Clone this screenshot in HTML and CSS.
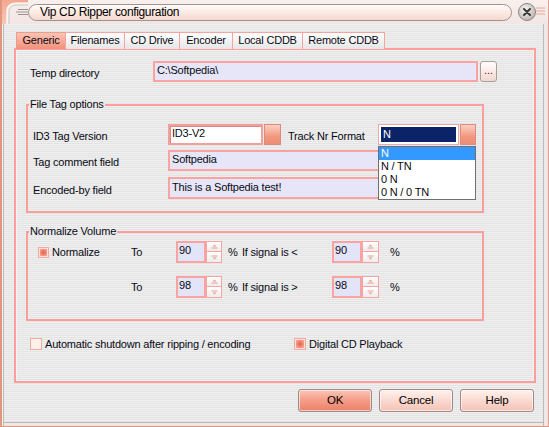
FILE: index.html
```html
<!DOCTYPE html>
<html>
<head>
<meta charset="utf-8">
<title>Vip CD Ripper configuration</title>
<link rel="stylesheet" href="styles.css">
</head>
<body>
<div class="window">
  <div class="titlebar">
    <div class="grip">
      <svg width="26" height="24" viewBox="0 0 26 24">
        <defs>
          <linearGradient id="sal" x1="0" y1="0" x2="0" y2="1">
            <stop offset="0" stop-color="#f4a88e"/>
            <stop offset="1" stop-color="#f7c8b8"/>
          </linearGradient>
        </defs>
        <path d="M0 0 H26 V3 H14 Q6 3 5 10 V24 H0 Z" fill="url(#sal)"/>
        <path d="M5 24 V10 Q6 3 14 3 H26" fill="none" stroke="#ffffff" stroke-width="1.2"/>
        <path d="M7 24 V11 Q8 5 15 5 H26" fill="none" stroke="#c9bcb8" stroke-width="0.8"/>
        <line x1="16" y1="9.5" x2="26" y2="9.5" stroke="#9a9290" stroke-width="1"/>
        <line x1="14" y1="12" x2="26" y2="12" stroke="#9a9290" stroke-width="1"/>
        <line x1="16" y1="14.5" x2="26" y2="14.5" stroke="#9a9290" stroke-width="1"/>
      </svg>
    </div>
    <div class="title-pill">Vip CD Ripper configuration</div>
    <div class="close">
      <svg width="35" height="24" viewBox="0 0 35 24">
        <defs>
          <radialGradient id="cg" cx="0.4" cy="0.35" r="0.7">
            <stop offset="0" stop-color="#f6f4f4"/>
            <stop offset="1" stop-color="#b9b2b0"/>
          </radialGradient>
        </defs>
        <line x1="24" y1="8" x2="33" y2="8" stroke="#e6a898" stroke-width="1"/>
        <line x1="24" y1="11" x2="33" y2="11" stroke="#e6a898" stroke-width="1"/>
        <line x1="24" y1="14" x2="33" y2="14" stroke="#e6a898" stroke-width="1"/>
        <circle cx="15" cy="12" r="8.5" fill="url(#cg)" stroke="#8d8684" stroke-width="1"/>
        <path d="M12 9 L18 15 M18 9 L12 15" stroke="#3c3838" stroke-width="2" stroke-linecap="round"/>
      </svg>
    </div>
  </div>

  <div class="client">
    <div class="tabs">
      <div class="tab active">Generic</div>
      <div class="tab">Filenames</div>
      <div class="tab">CD Drive</div>
      <div class="tab">Encoder</div>
      <div class="tab">Local CDDB</div>
      <div class="tab">Remote CDDB</div>
    </div>

    <div class="panel">
      <div class="temp-row">
        <span class="temp-lbl">Temp directory</span>
        <div class="field lav temp-field">C:\Softpedia\</div>
        <div class="btn-dots">...</div>
      </div>

      <fieldset class="group tag-group">
        <legend>File Tag options</legend>
        <div class="frow frow-first">
          <span class="flbl">ID3 Tag Version</span>
          <div class="combo">
            <div class="field white id3-field">ID3-V2</div>
            <div class="dropbtn"></div>
          </div>
          <span class="track-lbl">Track Nr Format</span>
          <div class="combo track-combo">
            <div class="sel-field"><span class="sel-inner">N</span></div>
            <div class="dropbtn dropbtn-track"></div>
            <ul class="droplist">
              <li class="hi">N</li>
              <li>N / TN</li>
              <li>0 N</li>
              <li>0 N / 0 TN</li>
            </ul>
          </div>
        </div>
        <div class="frow frow-comment">
          <span class="flbl">Tag comment field</span>
          <div class="field lav wide-field">Softpedia</div>
        </div>
        <div class="frow frow-enc">
          <span class="flbl">Encoded-by field</span>
          <div class="field lav wide-field">This is a Softpedia test!</div>
        </div>
      </fieldset>

      <fieldset class="group norm-group">
        <legend>Normalize Volume</legend>
        <div class="nrow nrow-first">
          <div class="chk-cell"><span class="chk on"></span><span class="chk-text">Normalize</span></div>
          <span>To</span>
          <div class="spin">
            <div class="spin-val">90</div>
            <div class="spin-btns">
              <div class="spin-b"><svg width="7" height="5" viewBox="0 0 7 5"><path d="M1.5 2.5 L3.5 0.5 L5.5 2.5 Z" fill="#eb9a92"/><line x1="0.5" y1="4" x2="6.5" y2="4" stroke="#eb9a92" stroke-width="1"/></svg></div>
              <div class="spin-b"><svg width="7" height="5" viewBox="0 0 7 5"><line x1="0.5" y1="1" x2="6.5" y2="1" stroke="#eb9a92" stroke-width="1"/><path d="M1.5 2.5 L3.5 4.5 L5.5 2.5 Z" fill="#eb9a92"/></svg></div>
            </div>
          </div>
          <span>%</span>
          <span>If signal is &lt;</span>
          <div class="spin spin-r">
            <div class="spin-val">90</div>
            <div class="spin-btns">
              <div class="spin-b"><svg width="7" height="5" viewBox="0 0 7 5"><path d="M1.5 2.5 L3.5 0.5 L5.5 2.5 Z" fill="#eb9a92"/><line x1="0.5" y1="4" x2="6.5" y2="4" stroke="#eb9a92" stroke-width="1"/></svg></div>
              <div class="spin-b"><svg width="7" height="5" viewBox="0 0 7 5"><line x1="0.5" y1="1" x2="6.5" y2="1" stroke="#eb9a92" stroke-width="1"/><path d="M1.5 2.5 L3.5 4.5 L5.5 2.5 Z" fill="#eb9a92"/></svg></div>
            </div>
          </div>
          <span>%</span>
        </div>
        <div class="nrow nrow-second">
          <div class="chk-cell"></div>
          <span>To</span>
          <div class="spin">
            <div class="spin-val">98</div>
            <div class="spin-btns">
              <div class="spin-b"><svg width="7" height="5" viewBox="0 0 7 5"><path d="M1.5 2.5 L3.5 0.5 L5.5 2.5 Z" fill="#eb9a92"/><line x1="0.5" y1="4" x2="6.5" y2="4" stroke="#eb9a92" stroke-width="1"/></svg></div>
              <div class="spin-b"><svg width="7" height="5" viewBox="0 0 7 5"><line x1="0.5" y1="1" x2="6.5" y2="1" stroke="#eb9a92" stroke-width="1"/><path d="M1.5 2.5 L3.5 4.5 L5.5 2.5 Z" fill="#eb9a92"/></svg></div>
            </div>
          </div>
          <span>%</span>
          <span>If signal is &gt;</span>
          <div class="spin spin-r">
            <div class="spin-val">98</div>
            <div class="spin-btns">
              <div class="spin-b"><svg width="7" height="5" viewBox="0 0 7 5"><path d="M1.5 2.5 L3.5 0.5 L5.5 2.5 Z" fill="#eb9a92"/><line x1="0.5" y1="4" x2="6.5" y2="4" stroke="#eb9a92" stroke-width="1"/></svg></div>
              <div class="spin-b"><svg width="7" height="5" viewBox="0 0 7 5"><line x1="0.5" y1="1" x2="6.5" y2="1" stroke="#eb9a92" stroke-width="1"/><path d="M1.5 2.5 L3.5 4.5 L5.5 2.5 Z" fill="#eb9a92"/></svg></div>
            </div>
          </div>
          <span>%</span>
        </div>
      </fieldset>

      <div class="opt-row">
        <div class="opt"><span class="chk"></span><span class="chk-text">Automatic shutdown after ripping / encoding</span></div>
        <div class="opt"><span class="chk on"></span><span class="chk-text">Digital CD Playback</span></div>
      </div>
    </div>

    <div class="buttons">
      <div class="btn btn-ok">OK</div>
      <div class="btn">Cancel</div>
      <div class="btn">Help</div>
    </div>
  </div>
</div>
</body>
</html>
```

FILE: styles.css
```css
* { box-sizing: border-box; }
html, body { margin: 0; padding: 0; }
body {
  width: 549px;
  height: 427px;
  overflow: hidden;
  font-family: "Liberation Sans", Arial, sans-serif;
  font-size: 11px;
  letter-spacing: -0.2px;
  color: #0a0a14;
  background: #ffffff;
}

.window {
  width: 549px;
  height: 427px;
  background: repeating-linear-gradient(to bottom, #efefef 0, #efefef 1px, #e4e4e4 1px, #e4e4e4 2px);
  border-left: 2px solid #e2957f;
  border-right: 1px solid #e0a08e;
  border-bottom: 1px solid #dc9884;
  box-shadow:
    inset 1px 0 #f8eeea,
    inset 2px 0 #bdbdbd,
    inset -1px 0 #f2e0da,
    inset -4px 0 #efe8e6,
    inset -5px 0 #b9b9b9,
    inset 0 -1px #f2e0da,
    inset 0 -3px #efe8e6,
    inset 0 -4px #b9b9b9;
}

/* ---------- title bar ---------- */
.titlebar {
  height: 24px;
  display: flex;
  align-items: flex-start;
  background: linear-gradient(to bottom, #f9efec, #f1e6e3);
}
.grip { width: 26px; height: 24px; }
.grip svg, .close svg { display: block; }
.title-pill {
  width: 484px;
  height: 17px;
  margin-top: 4px;
  border: 1px solid #9c9490;
  border-radius: 9px;
  background: linear-gradient(to bottom, #fffbfa 0%, #fbeae3 50%, #f5d9cd 100%);
  padding-left: 11px;
  font-size: 12px;
  line-height: 15px;
  letter-spacing: -0.35px;
  color: #000;
}
.close { width: 35px; height: 24px; }

/* ---------- client ---------- */
.client { padding: 8px 0 0 12px; }

.tabs {
  display: flex;
  margin-left: 2px;
  height: 16px;
}
.tab {
  height: 17px;
  padding: 0;
  border: 1px solid #f3a6a0;
  border-bottom: none;
  background: linear-gradient(to bottom, #ffffff, #e6e6e6);
  line-height: 15px;
  text-align: center;
  white-space: nowrap;
  position: relative;
  z-index: 1;
}
.tab + .tab { margin-left: -1px; }
.tab.active {
  background: linear-gradient(to bottom, #fbc4b4, #f2907a);
  border-color: #ef9c8c;
}
.tab:nth-child(1) { width: 50px; }
.tab:nth-child(2) { width: 60px; }
.tab:nth-child(3) { width: 56px; }
.tab:nth-child(4) { width: 54px; }
.tab:nth-child(5) { width: 71px; }
.tab:nth-child(6) { width: 83px; }

.panel {
  width: 522px;
  height: 335px;
  border: 2px solid #fb9e9c;
  box-shadow: inset 0 0 0 1px #f7f2f1;
}

/* ---------- temp directory ---------- */
.temp-row {
  display: flex;
  align-items: center;
  margin-top: 11px;
  height: 21px;
}
.temp-lbl {
  width: 137px;
  padding-left: 14px;
  padding-top: 3px;
}
.field {
  height: 21px;
  border: 2px solid #fba3a1;
  padding-left: 2px;
  line-height: 15px;
  white-space: nowrap;
  overflow: hidden;
}
.lav { background: #e6e6f8; }
.temp-field { width: 325px; }
.btn-dots {
  margin-left: 2px;
  width: 17px;
  height: 21px;
  border: 1px solid #a99c99;
  border-radius: 3px;
  background: linear-gradient(to bottom, #ffffff, #f3d6ce);
  text-align: center;
  line-height: 17px;
  color: #5a1a1a;
  letter-spacing: 0;
}

/* ---------- group boxes ---------- */
.group {
  margin: 0 0 0 10px;
  width: 458px;
  border: 2px solid #fb9e9c;
  padding: 0;
  min-inline-size: 0;
}
.group legend {
  padding: 0 1px;
  margin-left: 1px;
  line-height: 13px;
}
.tag-group { margin-top: 16px; padding-bottom: 12px; }
.norm-group { margin-top: 12px; padding-bottom: 21px; }

.frow {
  display: flex;
  align-items: center;
  height: 21px;
}
.frow-first { margin-top: 13px; }
.frow-comment { margin-top: 5px; }
.frow-enc { margin-top: 6px; height: 22px; }
.frow-enc .field { height: 22px; line-height: 16px; }
.flbl { width: 140px; padding-left: 5px; padding-top: 3px; }

.combo { display: flex; position: relative; }
.white {
  background: #ffffff;
  border-color: #f2a09c;
  box-shadow: inset 1px 1px 0 #d88a86;
}
.id3-field { width: 95px; }
.dropbtn {
  margin-left: 1px;
  width: 17px;
  height: 21px;
  border: 1px solid #dd8b7f;
  background: linear-gradient(to bottom, #fcd0c2, #f19880 60%, #ee8c74);
}
.dropbtn-track { width: 16px; }
.track-lbl { margin-left: 7px; width: 90px; padding-top: 2px; }
.sel-field {
  width: 81px;
  height: 21px;
  border: 1px solid #f0a8a4;
  background: #ffffff;
  padding: 2px;
}
.sel-inner {
  display: block;
  height: 15px;
  background: #0b2468;
  color: #ffffff;
  line-height: 15px;
  padding-left: 2px;
}
.droplist {
  position: absolute;
  top: 22px;
  left: 0;
  width: 98px;
  margin: 0;
  padding: 0;
  list-style: none;
  background: #ffffff;
  border: 1px solid #6f6f6f;
  z-index: 5;
}
.droplist li {
  height: 13px;
  line-height: 13px;
  padding-left: 2px;
}
.droplist li.hi { background: #3399ff; color: #ffffff; }
.wide-field { width: 308px; }

/* ---------- normalize ---------- */
.nrow {
  display: grid;
  grid-template-columns: 93px 45px 52px 14px 90px 58px auto;
  align-items: center;
  margin-left: 10px;
  height: 22px;
}
.nrow-first { margin-top: 3px; }
.nrow-second { margin-top: 13px; }
.chk-cell { display: flex; align-items: center; }
.chk {
  display: inline-block;
  width: 11px;
  height: 11px;
  border: 1px solid #f4aaa2;
  background: #fff0e8;
  flex: none;
}
.chk.on {
  background: radial-gradient(circle, #e8604e 0, #ef8270 35%, #f6a898 70%, #fbd0c6 100%);
  box-shadow: inset 0 0 0 1px #fde2da;
}
.chk-text { margin-left: 3px; }

.spin { display: flex; }
.spin-val {
  width: 30px;
  height: 22px;
  border: 2px solid #fba3a1;
  background: #e4e4f8;
  padding-left: 1px;
  line-height: 14px;
}
.spin-btns {
  width: 16px;
  height: 22px;
  display: flex;
  flex-direction: column;
}
.spin-r .spin-btns { width: 17px; }
.spin-b {
  height: 11px;
  border: 1px solid #fba3a1;
  background: linear-gradient(to bottom, #ffffff, #ececec);
  display: flex;
  align-items: center;
  justify-content: center;
}
.spin-b + .spin-b { border-top: none; }
.spin-b svg { display: block; }

/* ---------- options ---------- */
.opt-row {
  display: grid;
  grid-template-columns: 264px auto;
  margin-top: 17px;
  padding-left: 14px;
}
.opt { display: flex; align-items: center; }
.opt .chk { width: 12px; height: 12px; }

/* ---------- buttons ---------- */
.buttons {
  display: flex;
  gap: 7px;
  margin-top: 6px;
  padding-left: 284px;
}
.btn {
  width: 74px;
  height: 23px;
  border: 1px solid #9e8a86;
  border-radius: 3px;
  background: linear-gradient(to bottom, #fff2ee 0%, #fbdcd4 45%, #f4c2b5 100%);
  box-shadow: inset 0 0 0 1px rgba(255,255,255,0.6);
  text-align: center;
  line-height: 21px;
  font-size: 11.5px;
  color: #000;
}
.btn-ok {
  background: linear-gradient(to bottom, #fbc6b8 0%, #f5a08c 45%, #ec8068 100%);
}
```
